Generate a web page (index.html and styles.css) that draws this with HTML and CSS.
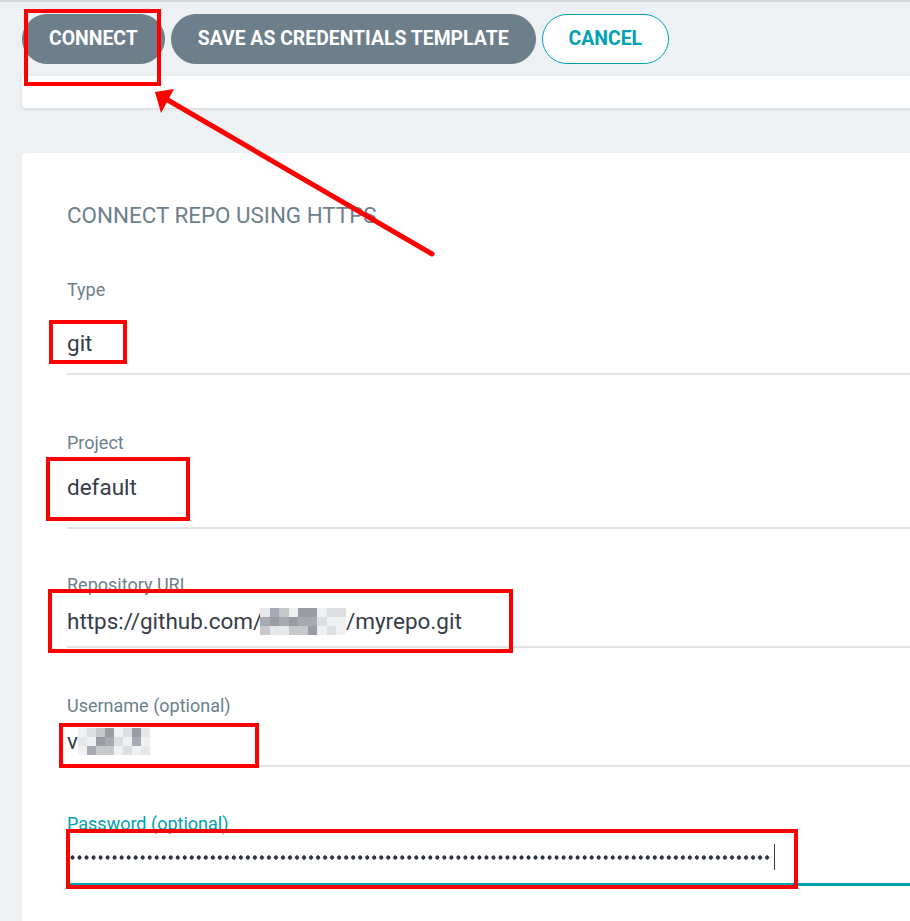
FILE: index.html
```html
<!DOCTYPE html>
<html lang="en">
<head>
<meta charset="utf-8">
<title>Connect repo</title>
<link rel="stylesheet" href="styles.css">
</head>
<body>
<div class="page">
  <header class="toolbar">
    <button class="btn btn--dark">Connect</button>
    <button class="btn btn--dark">Save as credentials template</button>
    <button class="btn btn--outline">Cancel</button>
  </header>
  <div class="card card--top"></div>

  <section class="card card--form">
    <h2 class="form-title">Connect repo using HTTPS</h2>

    <div class="field field--type">
      <div class="field__label">Type</div>
      <div class="field__value">git</div>
    </div>

    <div class="field field--project">
      <div class="field__label">Project</div>
      <div class="field__value">default</div>
    </div>

    <div class="field field--url">
      <div class="field__label">Repository URL</div>
      <div class="field__value">https://github.com/<span class="mosaic mosaic--url"><i class="c1"></i><i class="c2"></i><i class="c3"></i><i class="c2"></i><i class="c4"></i><i class="c1"></i><i class="c3"></i><i class="c2"></i><i class="c1"></i><i class="c5"></i><i class="c4"></i><i class="c3"></i><i class="c4"></i><i class="c2"></i><i class="c3"></i><i class="c4"></i><i class="c2"></i><i class="c4"></i><i class="c5"></i><i class="c6"></i><i class="c5"></i><i class="c6"></i><i class="c5"></i><i class="c6"></i><i class="c6"></i><i class="c5"></i><i class="c5"></i></span>/myrepo.git</div>
    </div>

    <div class="field field--user">
      <div class="field__label">Username (optional)</div>
      <div class="field__value">v<span class="mosaic mosaic--user"><i class="c5"></i><i class="c1"></i><i class="c5"></i><i class="c6"></i><i class="c5"></i><i class="c2"></i><i class="c3"></i><i class="c4"></i><i class="c3"></i><i class="c4"></i><i class="c2"></i><i class="c3"></i><i class="c5"></i><i class="c6"></i><i class="c5"></i><i class="c6"></i><i class="c5"></i><i class="c6"></i><i class="c4"></i><i class="c2"></i><i class="c5"></i><i class="c1"></i><i class="c5"></i><i class="c1"></i></span></div>
    </div>

    <div class="field field--password">
      <div class="field__label">Password (optional)</div>
      <div class="field__value"><span class="dots"></span><span class="caret"></span></div>
    </div>
  </section>
</div>

<div class="annotations">
  <div class="mark mark--connect"></div>
  <div class="mark mark--git"></div>
  <div class="mark mark--project"></div>
  <div class="mark mark--url"></div>
  <div class="mark mark--user"></div>
  <div class="mark mark--password"></div>
  <svg class="arrow" width="910" height="921" viewBox="0 0 910 921">
    <line x1="432" y1="254" x2="166" y2="99" stroke="#ff0000" stroke-width="5" stroke-linecap="round"/>
    <polygon points="155,92 174,89 161,113" fill="#ff0000"/>
  </svg>
</div>
</body>
</html>
```

FILE: styles.css
```css
html, body {
  margin: 0;
  padding: 0;
  overflow: hidden;
  height: 100%;
}
body {
  background: #eef1f4;
  font-family: Roboto, "Liberation Sans", Arial, sans-serif;
  position: relative;
}
.page {
  border-top: 2px solid #d4d8dc;
}
.toolbar {
  display: flex;
  gap: 6px;
  padding: 12px 22px 12px 22px;
  height: 50px;
}
.btn {
  height: 50px;
  border-radius: 25px;
  font-family: Roboto, "Liberation Sans", Arial, sans-serif;
  font-weight: 700;
  font-size: 19.4px;
  text-transform: uppercase;
  padding: 0 26px 1px;
  border: 1px solid transparent;
  letter-spacing: 0;
  line-height: 46px;
}
.btn--dark {
  background: #6d7f8b;
  color: #ffffff;
  border-color: #6d7f8b;
}
.btn--outline {
  background: #ffffff;
  color: #00a2b3;
  border-color: #00a2b3;
}
.card {
  background: #ffffff;
  margin-left: 22px;
  margin-right: -30px;
}
.card--top {
  height: 32px;
  border-radius: 0 0 4px 4px;
  box-shadow: 0 1px 3px rgba(0, 0, 0, 0.12);
}
.card--form {
  margin-top: 45px;
  border-radius: 4px 0 0 0;
  padding: 50px 0 80px 45px;
  min-height: 800px;
}
.form-title {
  margin: 0;
  font-size: 22.4px;
  line-height: 24px;
  font-weight: 400;
  color: #6d7f8b;
  text-transform: uppercase;
}
.field__label {
  font-size: 18px;
  line-height: 20px;
  color: #6d7f8b;
}
.field__value {
  font-size: 22.5px;
  line-height: 24px;
  height: 24px;
  color: #363c4a;
  border-bottom: 2px solid #dee3e8;
  display: flex;
  align-items: center;
}
.field--type { padding-top: 53px; }
.field--type .field__value { margin-top: 31px; padding-bottom: 18px; }
.field--project { padding-top: 58px; }
.field--project .field__value { margin-top: 22px; padding-bottom: 28px; }
.field--url { padding-top: 46px; }
.field--url .field__value { margin-top: 14px; padding-bottom: 13px; }
.field--user { padding-top: 48px; }
.field--user .field__value { margin-top: 13px; padding-bottom: 12px; }
.field--password { padding-top: 47px; }
.field--password .field__label { color: #00a2b3; }
.field--password .field__value {
  margin-top: 11px;
  padding-bottom: 14px;
  border-bottom: 3px solid #00a2b3;
}
.mosaic {
  display: inline-grid;
  grid-auto-flow: column;
  grid-template-rows: repeat(3, 9px);
  height: 27px;
  flex: none;
}
.mosaic i { display: block; width: 9.5px; height: 9px; }
.mosaic--url { grid-template-columns: repeat(9, 9.5px); margin-left: -2px; }
.mosaic--user { grid-template-columns: repeat(8, 9px); }
.c1 { background: #e6e7ea; }
.c2 { background: #a7aab2; }
.c3 { background: #c6c8cc; }
.c4 { background: #9a9ca3; }
.c5 { background: #eff0f2; }
.c6 { background: #dcdee2; }
.dots {
  display: inline-block;
  width: 703px;
  height: 5px;
  margin-left: 2px;
  background-image: radial-gradient(circle, #2f3542 1.9px, transparent 2.4px);
  background-size: 7.03px 5px;
  background-repeat: repeat-x;
  flex: none;
}
.caret {
  display: inline-block;
  width: 1px;
  height: 26px;
  background: #363c4a;
  margin-left: 2px;
  flex: none;
}
.annotations {
  position: absolute;
  left: 0;
  top: 0;
  width: 910px;
  height: 921px;
  pointer-events: none;
}
.mark {
  position: absolute;
  border: 4px solid #ff0000;
  box-sizing: border-box;
}
.mark--connect { left: 24px; top: 9px; width: 137px; height: 77px; }
.mark--git { left: 49px; top: 320px; width: 78px; height: 44px; }
.mark--project { left: 46px; top: 457px; width: 144px; height: 64px; }
.mark--url { left: 48px; top: 589px; width: 465px; height: 64px; }
.mark--user { left: 59px; top: 723px; width: 200px; height: 45px; }
.mark--password { left: 66px; top: 829px; width: 732px; height: 60px; }
.arrow {
  position: absolute;
  left: 0;
  top: 0;
}
```
